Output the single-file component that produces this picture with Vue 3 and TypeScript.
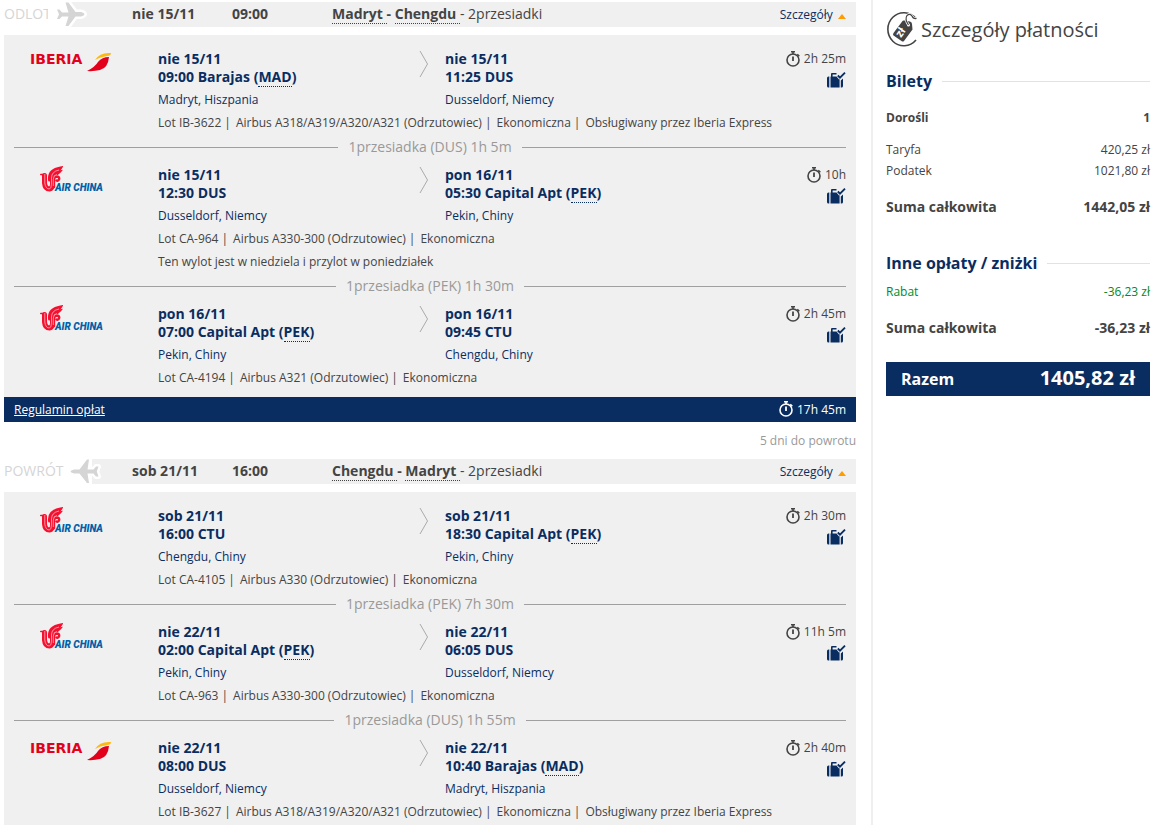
<script setup lang="ts">
interface Stop {
  date: string
  time: string
  airport: string
  code: string
  linked: boolean
  city: string
}
interface Segment {
  airline: 'iberia' | 'airchina'
  from: Stop
  to: Stop
  duration: string
  details: string[]
  note?: string
  layover?: string
}
interface Journey {
  label: string
  inbound: boolean
  date: string
  time: string
  origin: string
  target: string
  stops: string
  segments: Segment[]
  total?: string
  gap?: string
}

const stop = (date: string, time: string, airport: string, code: string, city: string): Stop => ({
  date, time, airport, code, city, linked: airport !== '',
})

const journeys: Journey[] = [
  {
    label: 'ODLOT', inbound: false, date: 'nie 15/11', time: '09:00',
    origin: 'Madryt', target: 'Chengdu', stops: '2przesiadki',
    total: '17h 45m', gap: '5 dni do powrotu',
    segments: [
      {
        airline: 'iberia', duration: '2h 25m', layover: '1przesiadka (DUS) 1h 5m',
        from: stop('nie 15/11', '09:00', 'Barajas', 'MAD', 'Madryt, Hiszpania'),
        to: stop('nie 15/11', '11:25', '', 'DUS', 'Dusseldorf, Niemcy'),
        details: ['Lot IB-3622', 'Airbus A318/A319/A320/A321 (Odrzutowiec)', 'Ekonomiczna', 'Obsługiwany przez Iberia Express'],
      },
      {
        airline: 'airchina', duration: '10h', layover: '1przesiadka (PEK) 1h 30m',
        from: stop('nie 15/11', '12:30', '', 'DUS', 'Dusseldorf, Niemcy'),
        to: stop('pon 16/11', '05:30', 'Capital Apt', 'PEK', 'Pekin, Chiny'),
        details: ['Lot CA-964', 'Airbus A330-300 (Odrzutowiec)', 'Ekonomiczna'],
        note: 'Ten wylot jest w niedziela i przylot w poniedziałek',
      },
      {
        airline: 'airchina', duration: '2h 45m',
        from: stop('pon 16/11', '07:00', 'Capital Apt', 'PEK', 'Pekin, Chiny'),
        to: stop('pon 16/11', '09:45', '', 'CTU', 'Chengdu, Chiny'),
        details: ['Lot CA-4194', 'Airbus A321 (Odrzutowiec)', 'Ekonomiczna'],
      },
    ],
  },
  {
    label: 'POWRÓT', inbound: true, date: 'sob 21/11', time: '16:00',
    origin: 'Chengdu', target: 'Madryt', stops: '2przesiadki',
    segments: [
      {
        airline: 'airchina', duration: '2h 30m', layover: '1przesiadka (PEK) 7h 30m',
        from: stop('sob 21/11', '16:00', '', 'CTU', 'Chengdu, Chiny'),
        to: stop('sob 21/11', '18:30', 'Capital Apt', 'PEK', 'Pekin, Chiny'),
        details: ['Lot CA-4105', 'Airbus A330 (Odrzutowiec)', 'Ekonomiczna'],
      },
      {
        airline: 'airchina', duration: '11h 5m', layover: '1przesiadka (DUS) 1h 55m',
        from: stop('nie 22/11', '02:00', 'Capital Apt', 'PEK', 'Pekin, Chiny'),
        to: stop('nie 22/11', '06:05', '', 'DUS', 'Dusseldorf, Niemcy'),
        details: ['Lot CA-963', 'Airbus A330-300 (Odrzutowiec)', 'Ekonomiczna'],
      },
      {
        airline: 'iberia', duration: '2h 40m',
        from: stop('nie 22/11', '08:00', '', 'DUS', 'Dusseldorf, Niemcy'),
        to: stop('nie 22/11', '10:40', 'Barajas', 'MAD', 'Madryt, Hiszpania'),
        details: ['Lot IB-3627', 'Airbus A318/A319/A320/A321 (Odrzutowiec)', 'Ekonomiczna', 'Obsługiwany przez Iberia Express'],
      },
    ],
  },
]
</script>

<template>
  <div class="page">
    <svg class="defs" aria-hidden="true">
      <symbol id="watch" viewBox="0 0 16 17">
        <circle cx="7" cy="9" r="6" fill="none" stroke="currentColor" stroke-width="1.6" />
        <path d="M5 .8h4M7 .8v2.500M11.300 3.300l2 2" fill="none" stroke="currentColor" stroke-width="1.600" />
        <path d="M7 5.500v4.500" stroke="currentColor" stroke-width="1.800" />
      </symbol>
      <symbol id="bag" viewBox="0 0 19 16">
        <path d="M0 6Q0 4.500 1.500 4.500H2.300V15.500H1.500Q0 15.500 0 14Z M3.500 4.500H4V2Q4 1 5 1H9.500V2.600H5.600V4.500H9.500L12 7.500L12.600 7V15.500H3.500Z M13.800 8.500L16 6.500V14Q16 15.500 14.500 15.500H13.800Z" fill="currentColor" />
        <path d="M10.800 3.500L13 5.700L18 .7" fill="none" stroke="currentColor" stroke-width="1.900" />
      </symbol>
      <symbol id="phoenix" viewBox="0 0 24 27">
        <g fill="none" stroke="#f5102f" stroke-linecap="round">
          <path d="M5.500 9.500V17Q6 23 10.500 23Q13.500 22.500 13.500 18V12" stroke-width="5" />
          <path d="M1.800 8.500H6" stroke-width="1.600" />
          <path d="M10.500 14Q9.500 4 21.500 2Q20 4.500 15 5.500" stroke-width="3" />
          <path d="M12.500 14Q12 6.500 21 5.500Q19 8 15.500 8.500" stroke-width="2.600" />
          <path d="M15 21V14Q15 10.500 18 10.500Q21 11 20 13.500Q18.500 15.500 17.500 14.500" stroke-width="2.400" />
        </g>
        <g fill="none" stroke="#f0f0f0" stroke-width=".6">
          <path d="M5.800 8V17Q6.500 23 10.500 23Q12.500 22 12.500 18V12Q12.500 5.500 20 4M14.300 20V13Q14.500 9 18 8.500" />
        </g>
      </symbol>
    </svg>

    <main class="trips">
      <section v-for="j in journeys" :key="j.label" class="journey">
        <header class="summary">
          <div class="direction" :class="{ inbound: j.inbound }">
            <span>{{ j.label }}</span>
            <svg v-if="!j.inbound" class="plane" width="34" height="28" viewBox="0 0 34 28" aria-hidden="true">
              <path d="M1 9.500H3.500L6 12.500H12.500L9.500 2.500H12.500L19.500 12H25Q28.500 13 28.500 14.300Q28.500 15.600 25 16.500H19.500L12.500 26H9.500L12.500 16.500H6L3.500 19H1L3 14.300Z" fill="#d5d5d5" stroke="#fff" stroke-width="5" stroke-linejoin="round" paint-order="stroke" />
            </svg>
            <svg v-else class="plane" width="36" height="28" viewBox="0 0 36 28" aria-hidden="true">
              <path d="M31.500 9.500H29L26.500 12.500H20.500L22 2.500H20L12.500 12.500H7Q3.500 13.500 3.500 14.500Q3.500 15.500 7 16.500H12.500L20 26H22L20.500 16.500H26.500L29 19.500H31.500L29.800 14.500Z" fill="#d5d5d5" stroke="#fff" stroke-width="5" stroke-linejoin="round" paint-order="stroke" />
            </svg>
          </div>
          <strong class="when">{{ j.date }}</strong>
          <strong class="when">{{ j.time }}</strong>
          <span class="route"><strong><abbr>{{ j.origin }}&nbsp;</abbr>- <abbr>{{ j.target }}&nbsp;</abbr></strong>- {{ j.stops }}</span>
          <button type="button" class="toggle">Szczegóły <i class="caret"></i></button>
        </header>

        <div class="panel">
          <template v-for="(s, i) in j.segments" :key="i">
            <article class="segment">
              <div class="logo">
                <svg v-if="s.airline === 'iberia'" class="iberia" width="84" height="22" viewBox="0 0 84 22" role="img" aria-label="Iberia">
                  <text x="0" y="14" class="iberia-name">IBERIA</text>
                  <path d="M57 21Q65 17 68 12Q72 7 79 7Q78 18 70 20Q64 21.500 57 21Z" fill="#e3001b" />
                  <path d="M65 10Q70 2 81 3Q81 6 77 6Q70 7 65 10Z" fill="#fdb913" />
                </svg>
                <svg v-else class="airchina" width="64" height="27" viewBox="0 0 64 27" role="img" aria-label="Air China">
                  <use href="#phoenix" width="24" height="27" />
                  <text x="16" y="25" class="china-name">AIR CHINA</text>
                </svg>
              </div>
              <div class="body">
                <div class="stops">
                  <div v-for="(p, k) in [s.from, s.to]" :key="k" class="stop">
                    <div class="place">
                      <strong>{{ p.date }}</strong>
                      <strong v-if="p.linked">{{ p.time }} {{ p.airport }} (<abbr>{{ p.code }}</abbr>)</strong>
                      <strong v-else>{{ p.time }} {{ p.code }}</strong>
                      <span>{{ p.city }}</span>
                    </div>
                    <svg v-if="k === 0" class="arrow" width="10" height="28" viewBox="0 0 10 28" aria-hidden="true">
                      <path d="M1 1L8.500 14L1 27" fill="none" stroke="#aaa" />
                    </svg>
                  </div>
                </div>
                <p class="details"><template v-for="(d, k) in s.details" :key="k"><span v-if="k" class="pipe">|</span>{{ d }}</template></p>
                <p v-if="s.note" class="details">{{ s.note }}</p>
              </div>
              <div class="meta">
                <span class="duration"><svg width="16" height="17" aria-hidden="true"><use href="#watch" /></svg>{{ s.duration }}</span>
                <svg class="bag" width="19" height="16" role="img" aria-label="Bagaż"><use href="#bag" /></svg>
              </div>
            </article>
            <div v-if="s.layover" class="layover">{{ s.layover }}</div>
          </template>
        </div>

        <footer v-if="j.total" class="total">
          <a href="#">Regulamin opłat</a>
          <span class="duration"><svg width="16" height="17" aria-hidden="true"><use href="#watch" /></svg>{{ j.total }}</span>
        </footer>
        <p v-if="j.gap" class="gap">{{ j.gap }}</p>
      </section>
    </main>

    <aside class="payment">
      <h1>
        <svg width="35" height="38" viewBox="0 0 35 38" aria-hidden="true">
          <path d="M30 8.500A16 16.500 0 1 0 30 30" fill="none" stroke="#444" stroke-width="1.600" />
          <path d="M18 10.500L24 11.500Q26 12 26 14L26.500 19.500L18 31Q17 32 15.500 31L7.500 25.500Q6.500 24.500 7.500 23L16.500 11Q17 10.300 18 10.500Z" fill="#444" />
          <circle cx="22.500" cy="15" r="1.500" fill="#fff" />
          <path d="M22.500 15Q18.500 9 21 5.500Q24 3 26 6Q27 9 30.500 8.500" fill="none" stroke="#fff" stroke-width="2.600" />
          <path d="M22.500 15Q18.500 9 21 5.500Q24 3 26 6Q27 9 30.500 8.500" fill="none" stroke="#444" stroke-width="1.200" />
          <text class="tag-text" transform="translate(15 28) rotate(-55)">zł</text>
        </svg>
        Szczegóły płatności
      </h1>
      <h2>Bilety</h2>
      <dl class="tickets">
        <div class="adults"><dt>Dorośli</dt><dd>1</dd></div>
        <div><dt>Taryfa</dt><dd>420,25 zł</dd></div>
        <div><dt>Podatek</dt><dd>1021,80 zł</dd></div>
        <div class="sum"><dt>Suma całkowita</dt><dd>1442,05 zł</dd></div>
      </dl>
      <h2>Inne opłaty / zniżki</h2>
      <dl class="fees">
        <div class="discount"><dt>Rabat</dt><dd>-36,23 zł</dd></div>
        <div class="sum"><dt>Suma całkowita</dt><dd>-36,23 zł</dd></div>
      </dl>
      <div class="grand"><span>Razem</span><strong>1405,82 zł</strong></div>
    </aside>
  </div>
</template>

<style>
body { margin: 0; background: #fff; }
</style>

<style scoped>
.page { display: flex; min-height: 100vh; font: 12px/18px "Open Sans", "Noto Sans", sans-serif; color: #444; }
.defs { position: absolute; width: 0; height: 0; }
.trips { flex: 1; min-width: 0; padding: 2px 15px 0 4px; }
.summary { display: flex; height: 25px; line-height: 24px; margin-bottom: 8px; padding-right: 10px; background: #f0f0f0; font-size: 14px; }
.direction { display: flex; width: 128px; flex: none; color: #d5d5d5; }
.direction span { width: 44px; overflow: hidden; background: #fff; border-right: 22px solid #fff; white-space: nowrap; }
.direction.inbound span { width: 60px; border-right-width: 28px; }
.plane { flex: none; margin: -2px 0 0 -14px; overflow: visible; }
.inbound .plane { margin-left: -25px; }
.when { width: 100px; flex: none; }
.route { flex: 1; white-space: nowrap; }
abbr { border-bottom: 1px dotted currentColor; text-decoration: none; }
.toggle { border: 0; padding: 0; background: none; font: 12px/24px "Open Sans", "Noto Sans", sans-serif; color: #0a2d61; cursor: pointer; }
.caret { display: inline-block; margin-left: 2px; border: 4px solid transparent; border-top: 0; border-bottom: 5px solid #ff9c00; }
.panel { background: #f0f0f0; padding: 9px 10px 8px; }
.segment { display: flex; padding-top: 6px; }
.logo { width: 144px; flex: none; }
.logo svg { display: block; overflow: visible; }
.iberia { margin-left: 16px; }
.airchina { margin-left: 25px; }
.iberia-name { font: bold 14px "DejaVu Sans", sans-serif; fill: #e3001b; }
.china-name { font: italic 900 10px Roboto, sans-serif; fill: #0060a8; }
.body { flex: 1; min-width: 0; }
.stops { display: flex; }
.stop { display: flex; width: 287px; color: #0a2d61; }
.place { display: flex; flex-direction: column; flex: 1; }
.place strong { font-size: 14px; }
.place span { margin-top: 2px; line-height: 23px; }
.arrow { margin-right: 16px; }
.details { margin: 0; line-height: 23px; white-space: nowrap; }
.pipe { margin: 0 5px 0 3px; }
.meta { display: flex; flex-direction: column; align-items: flex-end; gap: 4px; }
.duration { display: flex; align-items: center; gap: 2px; }
.bag { color: #0a2d61; }
.layover { display: flex; align-items: center; gap: 10px; font-size: 14px; line-height: 26px; color: #999; }
.layover::before, .layover::after { content: ""; flex: 1; height: 1px; background: #a0a0a0; }
.total { display: flex; justify-content: space-between; align-items: center; height: 25px; padding: 0 10px; background: #0a2d61; color: #fff; }
.total a { color: #fff; }
.gap { margin: 0; line-height: 37px; text-align: right; color: #999; }
.payment { width: 264px; flex: none; padding: 10px 7px 0 13px; border-left: 2px solid #efefef; }
h1 { display: flex; margin: 0 0 19px; font-size: 20px; line-height: 40px; font-weight: 400; white-space: nowrap; }
.tag-text { font: bold 11px "Open Sans", sans-serif; fill: #fff; }
h2 { display: flex; align-items: center; gap: 10px; margin: 0; font-size: 16px; line-height: 24px; color: #0a2d61; }
h2::after { content: ""; flex: 1; height: 1px; background: #e2e2e2; }
dl { margin: 0; }
dl div { display: flex; justify-content: space-between; line-height: 21px; }
dd { margin: 0; }
.tickets { padding: 14px 0 34px; }
.fees { padding: 6px 0 24px; }
.adults, .sum { font-weight: 700; }
.adults { margin-bottom: 11px; }
.sum { margin-top: 15px; font-size: 14px; }
.discount { color: #008a22; }
.grand { display: flex; justify-content: space-between; padding: 0 15px; height: 34px; line-height: 34px; background: #0a2d61; color: #fff; font-weight: 700; font-size: 16px; }
.grand strong { font-size: 20px; font-weight: 700; line-height: 32px; }
</style>
